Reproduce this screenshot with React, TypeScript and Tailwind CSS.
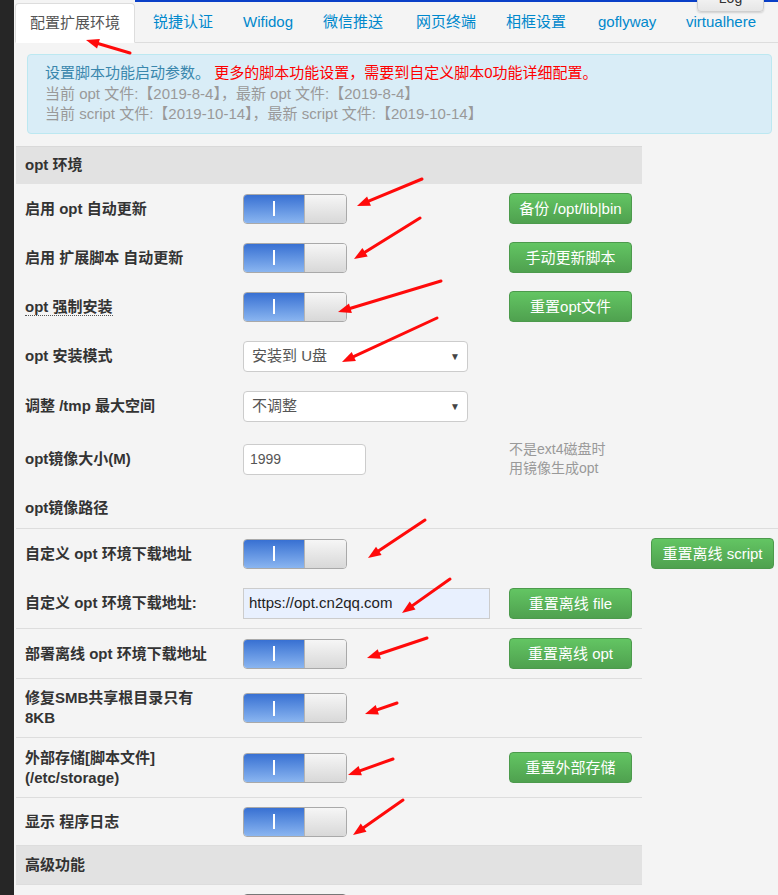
import React from "react";

const FONT = "font-['Liberation_Sans','Noto_Sans_CJK_SC',sans-serif]";

function Toggle() {
  return (
    <div className="flex h-[30px] w-[104px] shrink-0 overflow-hidden rounded-[4px] border border-[#a9a9a9]">
      <div className="flex w-[60px] items-center justify-center bg-linear-to-b from-[#3870d2] to-[#8ab5f0]">
        <div className="h-[15px] w-[2px] bg-white" />
      </div>
      <div className="flex-1 border-l border-[#b4b4b4] bg-linear-to-b from-[#f6f6f6] to-[#d8d8d8]" />
    </div>
  );
}

function GreenBtn({ children }: { children: React.ReactNode }) {
  return (
    <div className="flex h-[31px] w-[123px] shrink-0 items-center justify-center rounded-[4px] border border-[#4c9a4c] bg-linear-to-b from-[#63c563] to-[#4fa14f] text-[15px] leading-none text-white">
      {children}
    </div>
  );
}

function Label({ children }: { children: React.ReactNode }) {
  return (
    <div className="w-[227px] shrink-0 pl-[9px] text-[15px] font-bold leading-[20px] text-[#333]">
      {children}
    </div>
  );
}

function Select({ text }: { text: string }) {
  return (
    <div className="flex h-[31px] w-[225px] items-center justify-between rounded-[4px] border border-[#cccccc] bg-white pl-[8px] pr-[7px] text-[15px] text-[#555]">
      <span>{text}</span>
      <span className="text-[10px] text-[#444]">▼</span>
    </div>
  );
}

type Arrow = [number, number, number, number];
const arrows: Arrow[] = [
  [130, 53, 86, 40],
  [422, 179, 357, 206],
  [420, 218, 354, 259],
  [441, 281, 338, 312],
  [437, 318, 342, 362],
  [425, 520, 368, 558],
  [450, 579, 402, 613],
  [427, 638, 367, 658],
  [397, 703, 365, 714],
  [393, 759, 348, 775],
  [403, 800, 353, 835],
];

function Arrows() {
  return (
    <svg className="pointer-events-none absolute left-0 top-0" width={778} height={895}>
      {arrows.map(([x1, y1, x2, y2], i) => {
        const dx = x2 - x1;
        const dy = y2 - y1;
        const len = Math.hypot(dx, dy);
        const ux = dx / len;
        const uy = dy / len;
        const nx = -uy;
        const ny = ux;
        const L = 13;
        const W = 5;
        const bx = x2 - ux * L;
        const by = y2 - uy * L;
        const pts = `${x2},${y2} ${bx + nx * W},${by + ny * W} ${bx - nx * W},${by - ny * W}`;
        return (
          <g key={i}>
            <line x1={x1} y1={y1} x2={x2 - ux * 8} y2={y2 - uy * 8} stroke="#ff0a0a" strokeWidth={3} strokeLinecap="round" />
            <polygon points={pts} fill="#ff0a0a" />
          </g>
        );
      })}
    </svg>
  );
}

const tabs: [string, string][] = [
  ["锐捷认证", "w-[90px]"],
  ["Wifidog", "w-[80px]"],
  ["微信推送", "w-[93px]"],
  ["网页终端", "w-[90px]"],
  ["相框设置", "w-[92px]"],
  ["goflyway", "w-[88px]"],
  ["virtualhere", "w-[92px]"],
];

export default function App() {
  return (
    <div className={`relative flex h-[895px] w-[778px] overflow-hidden bg-[#f4f4f4] ${FONT}`}>
      <div className="w-[14px] shrink-0 bg-[#262626]" />
      <div className="flex min-w-0 flex-1 flex-col *:shrink-0">
        {/* top nav edge */}
        <div className="h-[3px]">
          <div className="ml-[121px] h-[2px] bg-[#0a40c8]" />
        </div>
        {/* tabs */}
        <div className="ml-[1px] flex h-[40px] border-b border-[#dddddd]">
          <div className="mr-[3px] flex h-[40px] w-[120px] shrink-0 items-center rounded-t-[4px] border border-[#dddddd] border-b-transparent bg-white pl-[14px] text-[15px] text-[#555]">
            配置扩展环境
          </div>
          {tabs.map(([t, w]) => (
            <div key={t} className={`flex h-[39px] shrink-0 items-center whitespace-nowrap pl-[15px] text-[15px] text-[#0088cc] ${w}`}>
              {t}
            </div>
          ))}
        </div>
        {/* alert */}
        <div className="ml-[13px] mt-[11px] h-[80px] w-[745px] rounded-[4px] border border-[#bce8f1] bg-[#d9edf7] pl-[17px] pt-[8px] text-[15px] leading-[20.5px]">
          <div className="whitespace-nowrap">
            <span className="text-[#3a87ad]">设置脚本功能启动参数。</span>
            <span className="text-[#ff0000]"> 更多的脚本功能设置，需要到自定义脚本0功能详细配置。</span>
          </div>
          <div className="whitespace-nowrap text-[#999]">当前 opt 文件:【2019-8-4】，最新 opt 文件:【2019-8-4】</div>
          <div className="whitespace-nowrap text-[#999]">当前 script 文件:【2019-10-14】，最新 script 文件:【2019-10-14】</div>
        </div>

        {/* table */}
        <div className="ml-[2px] mt-[12px] flex flex-col *:shrink-0">
          <div className="flex h-[38px] w-[626px] items-center border-t border-[#d9d9d9] bg-[#e2e2e2] pl-[9px] text-[15px] font-bold text-[#333]">
            opt 环境
          </div>

          <div className="flex h-[49px] w-[626px] items-center">
            <Label>启用 opt 自动更新</Label>
            <div className="w-[266px] shrink-0"><Toggle /></div>
            <GreenBtn>备份 /opt/lib|bin</GreenBtn>
          </div>
          <div className="flex h-[49px] w-[626px] items-center">
            <Label>启用 扩展脚本 自动更新</Label>
            <div className="w-[266px] shrink-0"><Toggle /></div>
            <GreenBtn>手动更新脚本</GreenBtn>
          </div>
          <div className="flex h-[49px] w-[626px] items-center">
            <Label>
              <span className="border-b border-dotted border-[#555]">opt 强制安装</span>
            </Label>
            <div className="w-[266px] shrink-0"><Toggle /></div>
            <GreenBtn>重置opt文件</GreenBtn>
          </div>
          <div className="flex h-[50px] w-[626px] items-center">
            <Label>opt 安装模式</Label>
            <div className="w-[266px] shrink-0"><Select text="安装到 U盘" /></div>
          </div>
          <div className="flex h-[50px] w-[626px] items-center">
            <Label>调整 /tmp 最大空间</Label>
            <div className="w-[266px] shrink-0"><Select text="不调整" /></div>
          </div>
          <div className="flex h-[56px] w-[626px] items-center">
            <Label>opt镜像大小(M)</Label>
            <div className="w-[266px] shrink-0">
              <div className="flex h-[31px] w-[123px] items-center rounded-[4px] border border-[#cccccc] bg-white pl-[6px] text-[14px] text-[#555]">
                1999
              </div>
            </div>
            <div className="text-[14px] leading-[19px] text-[#999]">
              不是ext4磁盘时
              <br />
              用镜像生成opt
            </div>
          </div>
          <div className="flex h-[41px] w-[626px] items-center">
            <Label>opt镜像路径</Label>
          </div>

          <div className="flex h-[50px] w-[762px] items-center border-t border-[#dddddd]">
            <Label>自定义 opt 环境下载地址</Label>
            <div className="w-[266px] shrink-0"><Toggle /></div>
            <div className="w-[142px] shrink-0" />
            <GreenBtn>重置离线 script</GreenBtn>
          </div>
          <div className="flex h-[50px] w-[626px] items-center">
            <Label>自定义 opt 环境下载地址:</Label>
            <div className="w-[266px] shrink-0">
              <div className="flex h-[31px] w-[247px] items-center border border-[#cccccc] bg-[#e8f0fe] pl-[5px] text-[15px] text-[#222]">
                https://opt.cn2qq.com
              </div>
            </div>
            <GreenBtn>重置离线 file</GreenBtn>
          </div>
          <div className="flex h-[50px] w-[626px] items-center border-t border-[#dddddd]">
            <Label>部署离线 opt 环境下载地址</Label>
            <div className="w-[266px] shrink-0"><Toggle /></div>
            <GreenBtn>重置离线 opt</GreenBtn>
          </div>
          <div className="flex h-[59px] w-[626px] items-center border-t border-[#dddddd]">
            <Label>
              修复SMB共享根目录只有
              <br />
              8KB
            </Label>
            <div className="w-[266px] shrink-0"><Toggle /></div>
          </div>
          <div className="flex h-[60px] w-[626px] items-center border-t border-[#dddddd]">
            <Label>
              外部存储[脚本文件]
              <br />
              (/etc/storage)
            </Label>
            <div className="w-[266px] shrink-0"><Toggle /></div>
            <GreenBtn>重置外部存储</GreenBtn>
          </div>
          <div className="flex h-[48px] w-[626px] items-center border-t border-[#dddddd]">
            <Label>显示 程序日志</Label>
            <div className="w-[266px] shrink-0"><Toggle /></div>
          </div>
          <div className="flex h-[39px] w-[626px] items-center border-t border-[#dddddd] bg-[#e2e2e2] pl-[9px] text-[15px] font-bold text-[#333]">
            高级功能
          </div>
          <div className="flex h-[49px] w-[626px] items-start border-t border-[#dddddd] pt-[9px]">
            <div className="w-[227px] shrink-0" />
            <div className="h-[30px] w-[104px] rounded-[4px] border border-[#777] bg-linear-to-b from-[#999] to-[#666]" />
          </div>
        </div>
      </div>

      {/* Log button partially visible */}
      <div className="absolute left-[697px] top-[-16px] flex h-[28px] w-[67px] items-center justify-center rounded-[4px] border border-[#cfcfcf] bg-linear-to-b from-[#ffffff] to-[#e6e6e6] text-[14px] text-[#333] shadow-[0_1px_2px_rgba(0,0,0,0.15)]">
        Log
      </div>

      <Arrows />
    </div>
  );
}
